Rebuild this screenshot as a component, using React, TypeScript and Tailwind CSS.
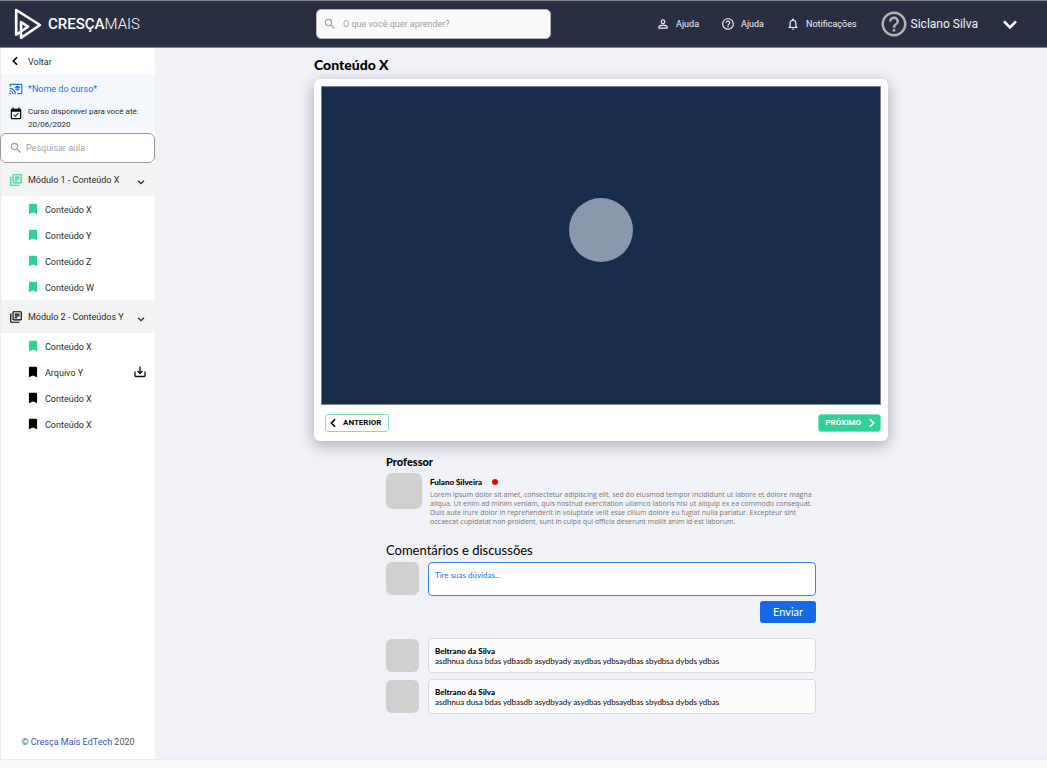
import type { ReactNode } from "react";
import {
  MdBookmark,
  MdCastForEducation,
  MdEventAvailable,
  MdHelpOutline,
  MdNotificationsNone,
  MdOutlineLibraryBooks,
  MdPersonOutline,
  MdSearch,
} from "react-icons/md";

function Chevron({ direction, className }: { direction: "left" | "right" | "down"; className: string }) {
  const paths = { left: "M8.5 1.5 4 6l4.5 4.5", right: "M3.5 1.5 8 6l-4.5 4.5", down: "M1.5 4 6 8.5 10.5 4" };
  return (
    <svg viewBox="0 0 12 12" className={className} fill="none" stroke="currentColor" strokeWidth="2" aria-hidden="true">
      <path d={paths[direction]} />
    </svg>
  );
}

function DownloadIcon() {
  return (
    <svg viewBox="0 0 12 12" className="size-3" fill="none" stroke="#111" strokeWidth="1.3" aria-hidden="true">
      <path d="M1 5.5v4.2q0 .8.8.8h8.4q.8 0 .8-.8V5.5M6 .5v7M3.5 5 6 7.5 8.5 5" />
    </svg>
  );
}

function Logo() {
  return (
    <a href="#" className="flex w-[302px] shrink-0 items-center gap-1.5 text-white">
      <svg viewBox="0 0 28 32" className="h-8 w-7" fill="none" stroke="currentColor" strokeLinejoin="round" strokeLinecap="round" aria-hidden="true">
        <path d="M7 25v4.8L26 17 2.2 2v24.8L14 18.6 7 14v7.5" strokeWidth="2.6" />
      </svg>
      <span className="text-[15px]">
        <span className="font-medium">CRESÇA</span>
        <span className="font-light">MAIS</span>
      </span>
    </a>
  );
}

function NavLink({ icon, children }: { icon: ReactNode; children: ReactNode }) {
  return (
    <a href="#" className="flex items-center gap-1.5">
      {icon}
      <span className="pt-0.5">{children}</span>
    </a>
  );
}

function Header() {
  return (
    <header className="flex h-12 shrink-0 items-center border-y border-t-[#85868f] border-b-[#85868f] bg-[#2a2e43] pr-[29px] pl-3.5 text-[#f2f2f5]">
      <Logo />
      <label className="flex h-[30px] w-[235px] items-center gap-1.5 rounded-[5px] border border-[#b4b4b4] bg-[#fafafa] px-1.5 text-[#a0a0a0]">
        <MdSearch className="size-3.5 shrink-0" />
        <input
          type="search"
          aria-label="Buscar cursos"
          placeholder="O que você quer aprender?"
          className="w-full min-w-0 bg-transparent pt-0.5 text-[9px] text-gray-700 outline-none placeholder:text-[#a0a0a0]"
        />
      </label>
      <nav className="ml-auto flex items-center gap-[22px] text-[9px]">
        <NavLink icon={<MdPersonOutline className="size-3.5" />}>Ajuda</NavLink>
        <NavLink icon={<MdHelpOutline className="size-3.5" />}>Ajuda</NavLink>
        <NavLink icon={<MdNotificationsNone className="size-3.5" />}>Notificações</NavLink>
        <button type="button" className="flex items-center gap-0.5 text-xs">
          <MdHelpOutline className="size-[30px] text-[#b3b3b3]" />
          Siclano Silva
          <Chevron direction="down" className="ml-[22px] size-4 text-white" />
        </button>
      </nav>
    </header>
  );
}

type Lesson = { title: string; done: boolean; download?: boolean };

function Module({ title, done, lessons }: { title: string; done: boolean; lessons: Lesson[] }) {
  return (
    <section>
      <button type="button" className="flex h-[33px] w-full items-center gap-[5px] bg-[#f3f3f3] pr-2.5 pl-2">
        <MdOutlineLibraryBooks className={done ? "size-3.5 text-[#2fd09a]" : "size-3.5 text-black"} />
        <span className="pt-0.5">{title}</span>
        <Chevron direction="down" className="mt-1 ml-auto size-2" />
      </button>
      <ul>
        {lessons.map((lesson, i) => (
          <li key={i}>
            <a href="#" className="flex h-[26px] items-center gap-[5px] pr-[9px] pl-[25px]">
              <MdBookmark className={lesson.done ? "size-3.5 text-[#2fd09a]" : "size-3.5 text-black"} />
              <span className="pt-[3px]">{lesson.title}</span>
              {lesson.download && (
                <span className="ml-auto">
                  <DownloadIcon />
                </span>
              )}
            </a>
          </li>
        ))}
      </ul>
    </section>
  );
}

function Sidebar() {
  return (
    <aside className="flex w-[155px] shrink-0 flex-col border-l border-[#ececec] bg-white text-[9px] text-[#2b2b2b]">
      <a href="#" className="flex h-[26px] items-center gap-2 px-[9px]">
        <Chevron direction="left" className="size-2.5 text-black" />
        <span className="pt-[3px]">Voltar</span>
      </a>
      <div className="bg-[#f4f8fc] px-2">
        <p className="flex h-[29px] items-center gap-[5px] text-[#1f6fea]">
          <MdCastForEducation className="size-3.5" />
          <span className="pt-0.5">*Nome do curso*</span>
        </p>
        <p className="flex h-[30px] items-start gap-[5px] pt-0.5 text-[8px] leading-[13px]">
          <MdEventAvailable className="mt-0.5 size-3.5 shrink-0 text-black" />
          <span>
            Curso disponível para você até:
            <br />
            20/06/2020
          </span>
        </p>
      </div>
      <label className="-ml-px flex h-[30px] items-center gap-[3px] rounded-md border border-[#999] bg-white px-2 text-[#a0a0a0]">
        <MdSearch className="size-3.5 shrink-0" />
        <input
          type="search"
          aria-label="Pesquisar aula"
          placeholder="Pesquisar aula"
          className="w-full min-w-0 bg-transparent pt-0.5 text-gray-700 outline-none placeholder:text-[#a0a0a0]"
        />
      </label>
      <Module
        title="Módulo 1 - Conteúdo X"
        done
        lessons={[
          { title: "Conteúdo X", done: true },
          { title: "Conteúdo Y", done: true },
          { title: "Conteúdo Z", done: true },
          { title: "Conteúdo W", done: true },
        ]}
      />
      <Module
        title="Módulo 2 - Conteúdos Y"
        done={false}
        lessons={[
          { title: "Conteúdo X", done: true },
          { title: "Arquivo Y", done: false, download: true },
          { title: "Conteúdo X", done: false },
          { title: "Conteúdo X", done: false },
        ]}
      />
      <p className="mt-auto pb-2.5 text-center text-[#555]">
        © <a href="#" className="text-[#3f51b5]">Cresça Mais EdTech</a> 2020
      </p>
    </aside>
  );
}

function Player() {
  return (
    <section className="w-full max-w-[574px]">
      <h1 className="text-sm leading-5 font-black">Conteúdo X</h1>
      <div className="mt-1 rounded-md bg-white p-[7px] shadow-[0_4px_16px_rgba(0,0,0,0.3)]">
        <div className="flex h-[319px] items-center justify-center border border-[#7b818c] bg-[#182c4d]">
          <button type="button" aria-label="Reproduzir" className="mb-8 size-16 rounded-full bg-[#8998ac]" />
        </div>
        <div className="flex items-center justify-between pt-[9px] pb-0.5 pl-1 font-['Roboto','Liberation_Sans',sans-serif] text-[8px] font-bold">
          <button type="button" className="flex h-[18px] items-center gap-[5px] rounded-[3px] border border-[#7fe0bf] bg-white pr-[7px] pl-0.5">
            <Chevron direction="left" className="size-2.5" />
            ANTERIOR
          </button>
          <button type="button" className="flex h-[18px] items-center gap-1.5 rounded-[3px] border border-[#7fe0bf] bg-[#2fd09a] pr-[3px] pl-1.5 text-white">
            PRÓXIMO
            <Chevron direction="right" className="size-2.5" />
          </button>
        </div>
      </div>
    </section>
  );
}

function Avatar({ className }: { className: string }) {
  return <div className={`shrink-0 rounded-md bg-[#d0d0d0] ${className}`} />;
}

function Comment({ author, text }: { author: string; text: string }) {
  return (
    <li className="flex items-center gap-[9px]">
      <Avatar className="size-[33px]" />
      <div className="flex h-[35px] grow flex-col justify-center rounded-sm border border-[#d9dade] bg-[#fcfcfc] px-1.5 text-[8px] leading-[10px]">
        <p className="font-black">{author}</p>
        <p>{text}</p>
      </div>
    </li>
  );
}

function Discussion() {
  return (
    <div className="w-full max-w-[430px]">
      <h2 className="mt-[13px] text-[11px] leading-4 font-black">Professor</h2>
      <div className="mt-[3px] flex gap-2">
        <Avatar className="size-9" />
        <div className="pt-1 text-[8px]">
          <p className="flex items-center gap-2.5 leading-[10px] font-black">
            Fulano Silveira
            <span className="size-1.5 rounded-full bg-[#ee0000]" />
          </p>
          <p className="mt-[3px] font-['Open_Sans',sans-serif] text-[7px] leading-[9px] text-[#777]">
            Lorem ipsum dolor sit amet, consectetur adipiscing elit, sed do eiusmod tempor incididunt ut labore et dolore magna
            <br />
            aliqua. Ut enim ad minim veniam, quis nostrud exercitation ullamco laboris nisi ut aliquip ex ea commodo consequat.
            <br />
            Duis aute irure dolor in reprehenderit in voluptate velit esse cillum dolore eu fugiat nulla pariatur. Excepteur sint
            <br />
            occaecat cupidatat non proident, sunt in culpa qui officia deserunt mollit anim id est laborum.
          </p>
        </div>
      </div>
      <h2 className="mt-4 text-[13px] leading-4">Comentários e discussões</h2>
      <form className="mt-1 flex flex-col items-end gap-[5px]">
        <div className="flex w-full gap-[9px]">
          <Avatar className="size-[33px]" />
          <textarea
            aria-label="Tire suas dúvidas"
            placeholder="Tire suas dúvidas..."
            className="h-[34px] grow resize-none rounded-sm border border-[#3d83ee] bg-white px-1.5 py-[7px] text-[8px] leading-[10px] outline-none placeholder:text-[#1f6fea]"
          />
        </div>
        <button type="button" className="h-[22px] rounded-[3px] bg-[#176ae6] px-[13px] text-[11px] text-white">
          Enviar
        </button>
      </form>
      <ul className="mt-[15px] flex flex-col gap-1.5">
        <Comment author="Beltrano da Silva" text="asdhnua dusa bdas ydbasdb asydbyady asydbas ydbsaydbas sbydbsa dybds ydbas" />
        <Comment author="Beltrano da Silva" text="asdhnua dusa bdas ydbasdb asydbyady asydbas ydbsaydbas sbydbsa dybds ydbas" />
      </ul>
    </div>
  );
}

export default function App() {
  return (
    <div className="flex min-h-screen flex-col bg-[#fafafa] pb-2 font-['Roboto','Liberation_Sans',sans-serif]">
      <Header />
      <div className="flex grow border-b border-[#ececec]">
        <Sidebar />
        <main className="flex min-w-0 grow flex-col items-center bg-[#f0f2f8] pt-[7px] pb-8 font-['Lato','Open_Sans',sans-serif] text-black">
          <Player />
          <Discussion />
        </main>
      </div>
    </div>
  );
}
